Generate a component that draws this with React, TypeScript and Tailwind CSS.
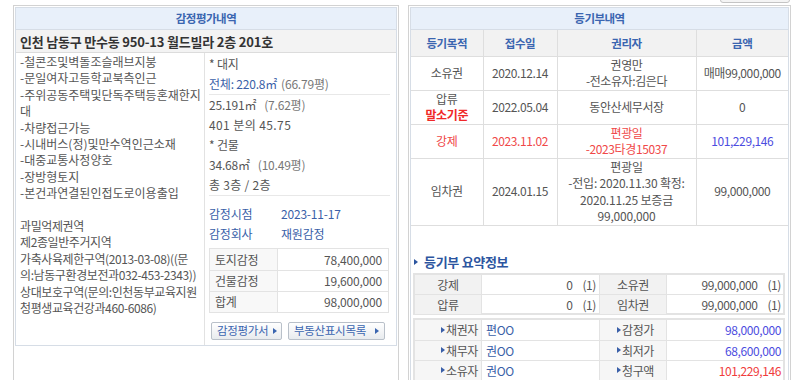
import React from "react";

const FONT = "font-['Noto_Sans_CJK_KR','Noto_Sans',sans-serif]";

function Tri({ className }: { className: string }) {
  return (
    <span
      className={`inline-block h-0 w-0 border-y-[3px] border-l-[4px] border-y-transparent ${className}`}
    />
  );
}

const features = [
  "-철콘조및벽돌조슬래브지붕",
  "-문일여자고등학교북측인근",
  "-주위공동주택및단독주택등혼재한지",
  "대",
  "-차량접근가능",
  "-시내버스(정)및만수역인근소재",
  "-대중교통사정양호",
  "-장방형토지",
  "-본건과연결된인접도로이용출입",
];

const zoning = [
  "과밀억제권역",
  "제2종일반주거지역",
  "가축사육제한구역(2013-03-08)((문",
  "의:남동구환경보전과032-453-2343))",
  "상대보호구역(문의:인천동부교육지원",
  "청평생교육건강과460-6086)",
];

const appraisal = [
  { label: "토지감정", value: "78,400,000" },
  { label: "건물감정", value: "19,600,000" },
  { label: "합계", value: "98,000,000" },
];

function LeftPanel() {
  return (
    <div className="h-[400px] w-[386px] shrink-0 border border-[#d2d2d2] p-px">
      <div className="border border-[#d6dde6]">
        {/* Header */}
        <div className="flex h-[22px] items-center justify-center border-b border-[#d6dde6] bg-[#e8f0fa] text-[11.5px] font-bold tracking-[-0.5px] text-[#3a65b0]">
          감정평가내역
        </div>

        {/* Address */}
        <div className="flex h-[23px] items-center border-b border-[#dcdcdc] bg-[#f3f3f3] pl-[4px] text-[13px] font-bold leading-none tracking-[-0.2px] text-[#333]">
          인천 남동구 만수동 950-13 월드빌라 2층 201호
        </div>

        <div className="flex">
          {/* Features */}
          <div className="w-[189px] shrink-0 overflow-hidden border-r border-[#e2e2e2] pl-[4px] pt-px text-[12px] leading-[16.4px] tracking-[0px] text-[#555]">
            {features.map((f) => (
              <div key={f} className="whitespace-nowrap">
                {f}
              </div>
            ))}
            <div className="h-[16.4px]" />
            {zoning.map((z) => (
              <div key={z} className="whitespace-nowrap tracking-[-0.4px]">
                {z}
              </div>
            ))}
          </div>

          {/* Area + appraisal */}
          <div className="flex-1 pb-[5px] pl-[4px] pr-[6px] pt-px text-[12px] leading-[20px] tracking-[-0.2px] text-[#555]">
            <div className="border-b border-[#e8e8e8]">
              <div>* 대지</div>
              <div>
                <span className="text-[#3a5fa8]">전체: 220.8㎡</span>
                <span className="ml-[4px] text-[#777]">(66.79평)</span>
              </div>
            </div>
            <div className="border-b border-[#e8e8e8]">
              <div>
                25.191㎡<span className="ml-[8px] text-[#777]">(7.62평)</span>
              </div>
              <div className="tracking-[0.4px]">401 분의 45.75</div>
              <div>* 건물</div>
              <div>
                34.68㎡<span className="ml-[8px] text-[#777]">(10.49평)</span>
              </div>
              <div className="tracking-[0.3px]">총 3층 / 2층</div>
            </div>

            <div className="pt-[8px] text-[#3a5fa8]">
              <div className="flex">
                <span className="w-[72px]">감정시점</span>
                <span>2023-11-17</span>
              </div>
              <div className="flex">
                <span className="w-[72px]">감정회사</span>
                <span>재원감정</span>
              </div>
            </div>

            <div className="mt-[4px] w-[180px] border border-[#e3e3e3]">
              {appraisal.map((r, i) => (
                <div
                  key={r.label}
                  className={`flex h-[21px] items-center ${i > 0 ? "border-t border-[#e3e3e3]" : ""}`}
                >
                  <div className="flex h-full w-[68px] items-center border-r border-[#e3e3e3] bg-[#f8f8f8] pl-[5px]">
                    {r.label}
                  </div>
                  <div className="flex-1 pr-[6px] text-right">{r.value}</div>
                </div>
              ))}
            </div>

            <div className="mt-[9px] flex gap-[6px] pl-[2px]">
              <button className="flex h-[18px] w-[71px] items-center justify-between rounded-[2px] border border-[#b9c0c9] bg-linear-to-b from-white to-[#e8ebee] pl-[5px] pr-[4px] text-[11.5px] leading-none tracking-[-0.3px] text-[#3a65b0]">
                감정평가서
                <Tri className="border-l-[#3a65b0]" />
              </button>
              <button className="flex h-[18px] w-[97px] items-center justify-between rounded-[2px] border border-[#b9c0c9] bg-linear-to-b from-white to-[#e8ebee] pl-[5px] pr-[5px] text-[11.5px] leading-none tracking-[-0.3px] text-[#3a65b0]">
                부동산표시목록
                <Tri className="border-l-[#3a65b0]" />
              </button>
            </div>
          </div>
        </div>
      </div>
    </div>
  );
}

const cell = "border-b border-r border-[#dedede] text-center align-middle last:border-r-0";

function RightPanel() {
  return (
    <div className="h-[400px] w-[383px] shrink-0 border border-[#d2d2d2] p-px">
      <div className="h-full border border-[#d6dde6]">
        <div className="flex h-[22px] items-center justify-center border-b border-[#d6dde6] bg-[#e8f0fa] text-[11.5px] font-bold tracking-[-0.5px] text-[#3a65b0]">
          등기부내역
        </div>

        <table className="w-full table-fixed border-collapse text-[12px] leading-[16.5px] tracking-[-0.4px] text-[#555]">
          <colgroup>
            <col className="w-[72px]" />
            <col className="w-[74px]" />
            <col className="w-[139px]" />
            <col />
          </colgroup>
          <thead>
            <tr className="h-[26px] bg-[#f2f2f2] text-[11.5px] font-bold text-[#3a65b0]">
              <th className={cell}>등기목적</th>
              <th className={cell}>접수일</th>
              <th className={cell}>권리자</th>
              <th className={cell}>금액</th>
            </tr>
          </thead>
          <tbody>
            <tr className="h-[33px]">
              <td className={cell}>소유권</td>
              <td className={cell}>2020.12.14</td>
              <td className={cell}>
                권영만
                <br />
                -전소유자:김은다
              </td>
              <td className={cell}>매매99,000,000</td>
            </tr>
            <tr className="h-[33px]">
              <td className={cell}>
                압류
                <br />
                <span className="font-bold text-[#f02828]">말소기준</span>
              </td>
              <td className={cell}>2022.05.04</td>
              <td className={cell}>동안산세무서장</td>
              <td className={cell}>0</td>
            </tr>
            <tr className="h-[34px] text-[#f04848]">
              <td className={cell}>강제</td>
              <td className={cell}>2023.11.02</td>
              <td className={cell}>
                편광일
                <br />
                -2023타경15037
              </td>
              <td className={`${cell} text-[#4c4ce0]`}>101,229,146</td>
            </tr>
            <tr className="h-[67px]">
              <td className={cell}>임차권</td>
              <td className={cell}>2024.01.15</td>
              <td className={`${cell} tracking-[-0.2px]`}>
                편광일
                <br />
                -전입: 2020.11.30 확정:
                <br />
                2020.11.25 보증금
                <br />
                99,000,000
              </td>
              <td className={cell}>99,000,000</td>
            </tr>
          </tbody>
        </table>

        {/* Summary */}
        <div className="mt-[28px] flex items-center gap-[6px] pl-[3px] text-[13px] font-bold leading-[16px] tracking-[-0.3px] text-[#2c55a0]">
          <Tri className="border-l-[#2c55a0]" />
          등기부 요약정보
        </div>

        <div className="ml-[2px] mt-[3px] w-[372px] border-2 border-[#e3e3e3] text-[12px] tracking-[-0.4px] text-[#555]">
          {[
            ["강제", "0", "소유권", "99,000,000"],
            ["압류", "0", "임차권", "99,000,000"],
          ].map((r, i) => (
            <div
              key={r[0]}
              className={`grid h-[19px] grid-cols-[67px_118px_67px_1fr] items-stretch leading-[19px] ${i > 0 ? "border-t border-[#e3e3e3]" : ""}`}
            >
              <div className="border-r border-[#e3e3e3] bg-[#f2f2f2] text-center">{r[0]}</div>
              <div className="border-r border-[#e3e3e3] pr-[3px] text-right">
                {r[1]}
                <span className="ml-[10px]">(1)</span>
              </div>
              <div className="border-r border-[#e3e3e3] bg-[#f2f2f2] text-center">{r[2]}</div>
              <div className="pr-[2px] text-right">
                {r[3]}
                <span className="ml-[10px]">(1)</span>
              </div>
            </div>
          ))}
        </div>

        <div className="ml-[2px] mt-[3px] w-[372px] border-2 border-[#e3e3e3] text-[12px] tracking-[-0.4px] text-[#555]">
          {[
            ["채권자", "편OO", "감정가", "98,000,000", "text-[#4c4ce0]"],
            ["채무자", "권OO", "최저가", "68,600,000", "text-[#4c4ce0]"],
            ["소유자", "권OO", "청구액", "101,229,146", "text-[#f03c3c]"],
          ].map((r, i) => (
            <div
              key={r[0]}
              className={`grid h-[20px] grid-cols-[67px_118px_67px_1fr] items-center leading-[19px] ${i > 0 ? "border-t border-[#e3e3e3]" : ""}`}
            >
              <div className="flex h-full items-center justify-end gap-[1px] border-r border-[#e3e3e3] bg-[#f6f6f6] pr-[3px]">
                <Tri className="border-l-[#3a5fa8]" />
                {r[0]}
              </div>
              <div className="flex h-full items-center border-r border-[#e3e3e3] pl-[4px] text-[#3a5fa8]">
                {r[1]}
              </div>
              <div className="flex h-full items-center justify-end gap-[1px] border-r border-[#e3e3e3] bg-[#f6f6f6] pr-[12px]">
                <Tri className="border-l-[#3a5fa8]" />
                {r[2]}
              </div>
              <div className={`pr-[2px] text-right ${r[4]}`}>{r[3]}</div>
            </div>
          ))}
        </div>
      </div>
    </div>
  );
}

export default function App() {
  return (
    <div className={`relative h-[380px] w-[800px] overflow-hidden bg-white ${FONT}`}>
      {/* cut-off button at top edge */}
      <div className="absolute right-[10px] top-[-16px] h-[19px] w-[70px] rounded-[3px] border border-[#c4c4c4] bg-[#f4f4f4]" />
      <div className="flex gap-[9px] pl-[13px] pt-[5px]">
        <LeftPanel />
        <RightPanel />
      </div>
    </div>
  );
}
